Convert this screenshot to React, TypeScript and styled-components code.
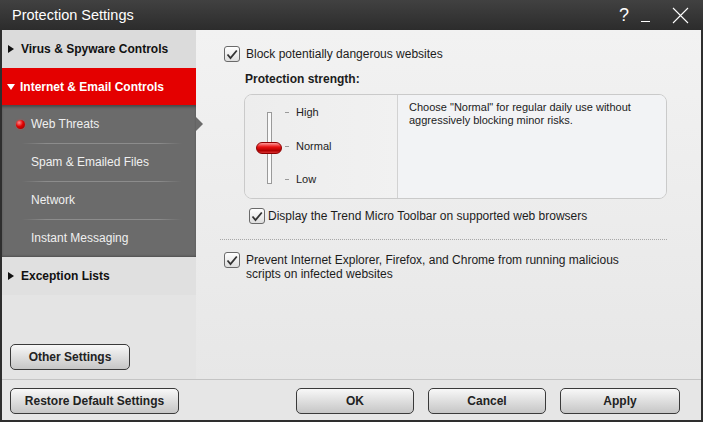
import React from "react";
import styled, { createGlobalStyle } from "styled-components";

const GlobalStyle = createGlobalStyle`
  html, body {
    margin: 0;
    padding: 0;
    width: 703px;
    height: 422px;
    overflow: hidden;
    background: #2b2b2b;
  }
  body {
    font-family: "Liberation Sans", Arial, sans-serif;
    color: #1c1c1c;
  }
  * { box-sizing: border-box; }
`;

const Window = styled.div`
  width: 703px;
  height: 422px;
  display: flex;
  flex-direction: column;
`;

const TitleBar = styled.div`
  height: 30px;
  flex: none;
  display: flex;
  align-items: center;
  padding: 0 14px 0 12px;
  background: linear-gradient(#414141, #2c2c2c);
  color: #fff;
`;

const Title = styled.div`
  flex: 1;
  font-size: 14.5px;
`;

const TitleButtons = styled.div`
  display: flex;
  align-items: center;
  gap: 12px;
  color: #fff;
`;

const Help = styled.span`
  font-size: 18px;
  line-height: 1;
`;

const Minimize = styled.span`
  width: 9px;
  height: 14px;
  border-bottom: 1px solid #fff;
  margin-right: 10px;
`;

const Body = styled.div`
  flex: 1;
  display: flex;
  flex-direction: column;
  border: 2px solid #2e2e2e;
  border-top: none;
  background: #e6e6e6;
  min-height: 0;
`;

const Main = styled.div`
  height: 349px;
  display: flex;
`;

const Sidebar = styled.nav`
  width: 194px;
  flex: none;
  display: flex;
  flex-direction: column;
  background: #e4e4e4;
  position: relative;
  z-index: 1;
`;

const SectionHeader = styled.div<{ $active?: boolean; $h?: number; $bg?: string }>`
  height: ${(p) => p.$h ?? 38}px;
  flex: none;
  display: flex;
  align-items: center;
  padding-left: ${(p) => (p.$active ? 5 : 6)}px;
  gap: ${(p) => (p.$active ? 5 : 7)}px;
  font-size: 12px;
  font-weight: bold;
  background: ${(p) => p.$bg ?? (p.$active ? "#e40000" : "#dbdbdb")};
  color: ${(p) => (p.$active ? "#fff" : "#111")};
`;

const Arrow = styled.span<{ $down?: boolean }>`
  width: 0;
  height: 0;
  ${(p) =>
    p.$down
      ? `border-left: 4.5px solid transparent;
         border-right: 4.5px solid transparent;
         border-top: 6px solid #fff;`
      : `border-top: 4.5px solid transparent;
         border-bottom: 4.5px solid transparent;
         border-left: 6px solid #111;`}
`;

const SubList = styled.div`
  background: #6b6b6b;
  box-shadow: inset 0 3px 3px -1px rgba(0, 0, 0, 0.35),
    inset 0 -2px 2px -1px rgba(0, 0, 0, 0.25);
`;

const SubItem = styled.div<{ $first?: boolean; $selected?: boolean }>`
  height: 38px;
  display: flex;
  align-items: center;
  padding-left: 14px;
  font-size: 12px;
  color: #f0f0f0;
  position: relative;

  &::before {
    content: "";
    display: ${(p) => (p.$first ? "none" : "block")};
    position: absolute;
    top: 0;
    left: 20px;
    width: 160px;
    height: 1px;
    background: linear-gradient(
      90deg,
      rgba(140, 140, 140, 0),
      #8c8c8c 15%,
      #8c8c8c 85%,
      rgba(140, 140, 140, 0)
    );
  }

  &::after {
    content: "";
    display: ${(p) => (p.$selected ? "block" : "none")};
    position: absolute;
    right: -7px;
    top: 12px;
    width: 0;
    height: 0;
    border-top: 7.5px solid transparent;
    border-bottom: 7.5px solid transparent;
    border-left: 7px solid #6b6b6b;
  }
`;

const BulletSlot = styled.span`
  width: 15px;
  flex: none;
  display: flex;
  align-items: center;
`;

const Bullet = styled.span`
  width: 9px;
  height: 9px;
  border-radius: 50%;
  background: radial-gradient(circle at 35% 30%, #ff8a8a, #e00000 45%, #8a0000);
  box-shadow: 0 0 2px rgba(255, 60, 60, 0.7);
`;

const SidebarFooter = styled.div`
  margin-top: auto;
  padding: 0 0 9px 8px;
`;

const Button = styled.button<{ $w: number }>`
  width: ${(p) => p.$w}px;
  height: 26px;
  border: 1px solid #3a3a3a;
  border-radius: 5px;
  background: linear-gradient(#f8f8f8, #dcdcdc 55%, #c6c6c6);
  font-family: "Liberation Sans", Arial, sans-serif;
  font-size: 12px;
  font-weight: bold;
  color: #222;
  padding: 0;
  flex: none;
`;

const Content = styled.section`
  flex: 1;
  display: flex;
  flex-direction: column;
  padding: 16px 34px 0 24px;
  background: linear-gradient(#f2f2f2, #e7e7e7);
`;

const CheckRow = styled.label<{ $indent: number; $gap: number; $top?: number }>`
  display: flex;
  align-items: flex-start;
  gap: ${(p) => p.$gap}px;
  margin-left: ${(p) => p.$indent}px;
  margin-top: ${(p) => p.$top ?? 0}px;
  font-size: 12px;
  line-height: 14px;
  color: #1c1c1c;
`;

const RowText = styled.span<{ $max?: number }>`
  padding-top: 1px;
  max-width: ${(p) => (p.$max ? `${p.$max}px` : "none")};
`;

const Box = styled.span`
  width: 16px;
  height: 16px;
  flex: none;
  border: 1px solid #6a6a6a;
  border-radius: 3px;
  background: linear-gradient(#ffffff, #dedede);
  display: flex;
  align-items: center;
  justify-content: center;
`;

const Checkbox = () => (
  <Box>
    <svg width="12" height="11" viewBox="0 0 12 11">
      <path d="M1.5 5.5 L4.5 9 L10.8 1.5" fill="none" stroke="#333" strokeWidth="1.8" />
    </svg>
  </Box>
);

const StrengthLabel = styled.div`
  margin: 10px 0 0 25px;
  font-size: 12px;
  font-weight: bold;
  line-height: 14px;
`;

const StrengthBox = styled.div`
  margin: 8px 0 0 24px;
  height: 105px;
  display: flex;
  border: 1px solid #cacaca;
  border-radius: 8px;
  overflow: hidden;
`;

const SliderPane = styled.div`
  width: 152px;
  flex: none;
  display: flex;
  padding-left: 11px;
  background: linear-gradient(90deg, #ededed, #f1f1f1);
`;

const TrackColumn = styled.div`
  width: 26px;
  position: relative;
  display: flex;
  justify-content: center;
  padding-top: 17px;
`;

const Track = styled.div`
  width: 5px;
  height: 72px;
  border: 1px solid #9a9a9a;
  background: #fafafa;
`;

const Knob = styled.div`
  position: absolute;
  left: 0;
  top: 47px;
  width: 26px;
  height: 12px;
  border-radius: 6px;
  border: 1px solid #8c0000;
  background: linear-gradient(#ff9a9a, #e81010 40%, #b00000 75%, #d83030);
`;

const Levels = styled.div`
  display: flex;
  flex-direction: column;
  justify-content: space-between;
  padding: 10px 0 12px 3px;
`;

const Level = styled.div`
  display: flex;
  align-items: center;
  height: 14px;
  font-size: 11px;
  color: #222;
`;

const Tick = styled.span`
  width: 4px;
  height: 1px;
  background: #9a9a9a;
  margin: 1px 7px 0 0;
`;

const HintPane = styled.div`
  flex: 1;
  border-left: 1px solid #d2d2d2;
  background: #f2f3f5;
  padding: 6px 12px 0 11px;
  font-size: 11px;
  line-height: 13px;
  color: #1c1c1c;
`;

const Divider = styled.div`
  margin-top: 15px;
  border-top: 1px dotted #a8a8a8;
`;

const Footer = styled.footer`
  height: 41px;
  flex: none;
  display: flex;
  align-items: flex-start;
  gap: 14px;
  padding: 8px 21px 0 8px;
  border-top: 1px solid #c4c4c4;
  background: #e6e6e6;
`;

const Spacer = styled.div`
  flex: 1;
`;

const subItems = ["Web Threats", "Spam & Emailed Files", "Network", "Instant Messaging"];

export default function App() {
  return (
    <Window>
      <GlobalStyle />
      <TitleBar>
        <Title>Protection Settings</Title>
        <TitleButtons>
          <Help>?</Help>
          <Minimize />
          <svg width="17" height="17" viewBox="0 0 17 17">
            <path d="M1 1 L16 16 M16 1 L1 16" stroke="#fff" strokeWidth="1.1" />
          </svg>
        </TitleButtons>
      </TitleBar>
      <Body>
        <Main>
          <Sidebar>
            <SectionHeader>
              <Arrow />
              Virus &amp; Spyware Controls
            </SectionHeader>
            <SectionHeader $active $h={37}>
              <Arrow $down />
              Internet &amp; Email Controls
            </SectionHeader>
            <SubList>
              {subItems.map((item, i) => (
                <SubItem key={item} $first={i === 0} $selected={i === 0}>
                  <BulletSlot>{i === 0 && <Bullet />}</BulletSlot>
                  {item}
                </SubItem>
              ))}
            </SubList>
            <SectionHeader $bg="#e0e0e0">
              <Arrow />
              Exception Lists
            </SectionHeader>
            <SidebarFooter>
              <Button $w={120}>Other Settings</Button>
            </SidebarFooter>
          </Sidebar>
          <Content>
            <CheckRow $indent={4} $gap={6}>
              <Checkbox />
              <RowText>Block potentially dangerous websites</RowText>
            </CheckRow>
            <StrengthLabel>Protection strength:</StrengthLabel>
            <StrengthBox>
              <SliderPane>
                <TrackColumn>
                  <Track />
                  <Knob />
                </TrackColumn>
                <Levels>
                  <Level>
                    <Tick />
                    High
                  </Level>
                  <Level>
                    <Tick />
                    Normal
                  </Level>
                  <Level>
                    <Tick />
                    Low
                  </Level>
                </Levels>
              </SliderPane>
              <HintPane>
                Choose "Normal" for regular daily use without
                <br />
                aggressively blocking minor risks.
              </HintPane>
            </StrengthBox>
            <CheckRow $indent={29} $gap={3} $top={9}>
              <Checkbox />
              <RowText>Display the Trend Micro Toolbar on supported web browsers</RowText>
            </CheckRow>
            <Divider />
            <CheckRow $indent={4} $gap={6} $top={12}>
              <Checkbox />
              <RowText $max={395}>
                Prevent Internet Explorer, Firefox, and Chrome from running malicious scripts on
                infected websites
              </RowText>
            </CheckRow>
          </Content>
        </Main>
        <Footer>
          <Button $w={169}>Restore Default Settings</Button>
          <Spacer />
          <Button $w={118}>OK</Button>
          <Button $w={118}>Cancel</Button>
          <Button $w={120}>Apply</Button>
        </Footer>
      </Body>
    </Window>
  );
}
